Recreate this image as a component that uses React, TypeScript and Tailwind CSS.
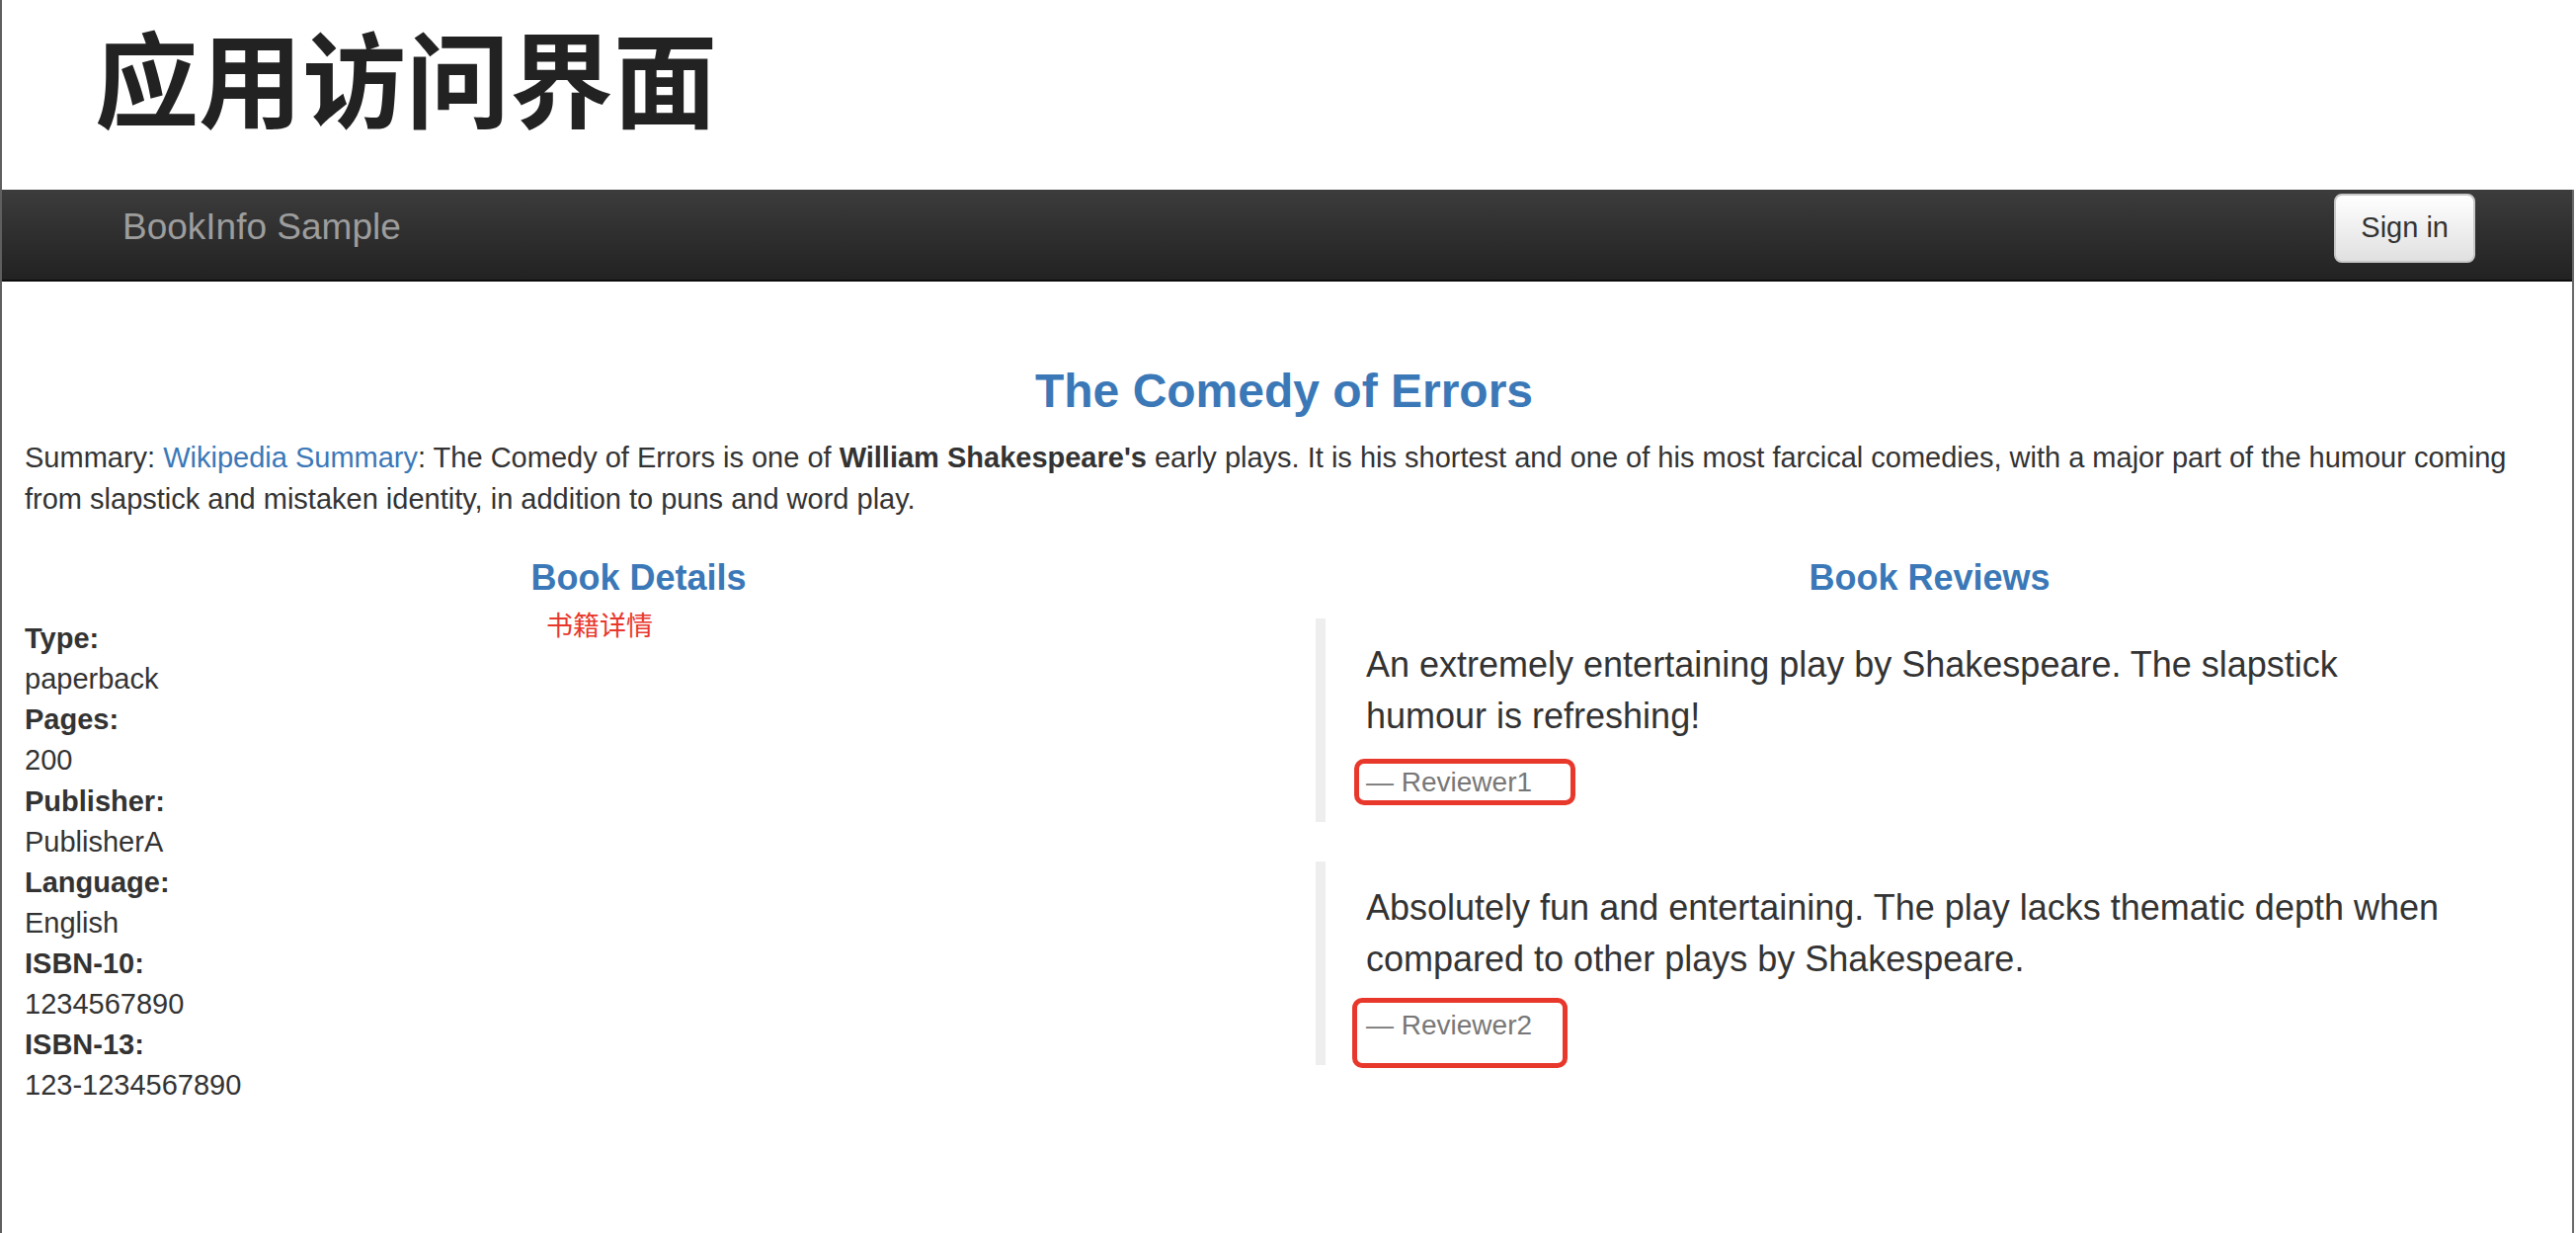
const details: [string, string][] = [
  ["Type:", "paperback"],
  ["Pages:", "200"],
  ["Publisher:", "PublisherA"],
  ["Language:", "English"],
  ["ISBN-10:", "1234567890"],
  ["ISBN-13:", "123-1234567890"],
];

// lines are split the way the page wraps them
const reviews = [
  {
    lines: ["An extremely entertaining play by Shakespeare. The slapstick", "humour is refreshing!"],
    reviewer: "Reviewer1",
  },
  {
    lines: ["Absolutely fun and entertaining. The play lacks thematic depth when", "compared to other plays by Shakespeare."],
    reviewer: "Reviewer2",
  },
];

export default function App() {
  return (
    <div className="relative h-[1248px] w-[2608px] overflow-hidden border-l-2 border-[#5f5f5f] bg-white font-['Liberation_Sans',Arial,sans-serif] text-[#333]">
      {/* Page caption */}
      <div className="h-[192px] pl-[94px] pt-[23px]">
        <h1 className="font-['Noto_Sans_CJK_SC',sans-serif] text-[105px] font-bold leading-none text-[#222]">
          应用访问界面
        </h1>
      </div>

      <div className="mr-[2px] h-[1056px] border-r-2 border-[#6a6a6a]">
        {/* Navbar */}
        <div className="flex h-[93px] items-start justify-between border-b-2 border-[#0c0c0c] bg-linear-to-b from-[#3c3c3c] to-[#222] pl-[122px] pr-[98px]">
          <span className="pt-[12px] text-[37px] leading-[52px] text-[#9d9d9d]">BookInfo Sample</span>
          <button className="mt-[4px] rounded-[8px] border-2 border-[#c8c8c8] bg-linear-to-b from-white to-[#e0e0e0] px-[25px] py-[12px] text-[29px] leading-[41.6px] text-[#333]">
            Sign in
          </button>
        </div>

        {/* Content */}
        <div className="pl-[23px] pr-[29px]">
          <h3 className="mt-[84px] mb-[21px] text-center text-[48px] font-bold leading-[53px] text-[#3b78b7]">
            The Comedy of Errors
          </h3>
          <p className="mb-[21px] text-[29px] leading-[41.6px]">
            Summary: <span className="text-[#3b78b7]">Wikipedia Summary</span>: The Comedy of Errors is one of{" "}
            <b>William Shakespeare's</b> early plays. It is his shortest and one of his most farcical comedies, with a
            major part of the humour coming from slapstick and mistaken identity, in addition to puns and word play.
          </p>

          <div className="grid grid-cols-2 gap-x-[64px]">
            {/* Book details */}
            <div className="relative">
              <h4 className="mt-[18px] mb-[21px] text-center text-[36px] font-bold leading-[40px] text-[#3b78b7]">
                Book Details
              </h4>
              <span className="absolute left-[528px] top-[71px] font-['Noto_Sans_CJK_SC',sans-serif] text-[27px] leading-none text-[#e8372b]">
                书籍详情
              </span>
              <dl className="text-[29px] leading-[41.1px]">
                {details.map(([label, value]) => (
                  <div key={label}>
                    <dt className="font-bold">{label}</dt>
                    <dd>{value}</dd>
                  </div>
                ))}
              </dl>
            </div>

            {/* Book reviews */}
            <div>
              <h4 className="mt-[18px] mb-[21px] text-center text-[36px] font-bold leading-[40px] text-[#3b78b7]">
                Book Reviews
              </h4>
              {reviews.map((r) => (
                <blockquote key={r.reviewer} className="mb-[40px] border-l-[10px] border-[#eee] py-[21px] pl-[41px] pr-[42px]">
                  <p className="mb-[21px] text-[36px] leading-[52px]">
                    {r.lines[0]}
                    <br />
                    {r.lines[1]}
                  </p>
                  <footer className="text-[28px] leading-[39px] text-[#777]">{"\u2014\u00a0" + r.reviewer}</footer>
                </blockquote>
              ))}
            </div>
          </div>
        </div>
      </div>

      {/* Red annotation boxes */}
      <div className="absolute left-[1369px] top-[768px] h-[47px] w-[224px] rounded-[10px] border-[5px] border-[#e8372b]" />
      <div className="absolute left-[1367px] top-[1010px] h-[71px] w-[218px] rounded-[10px] border-[5px] border-[#e8372b]" />
    </div>
  );
}
